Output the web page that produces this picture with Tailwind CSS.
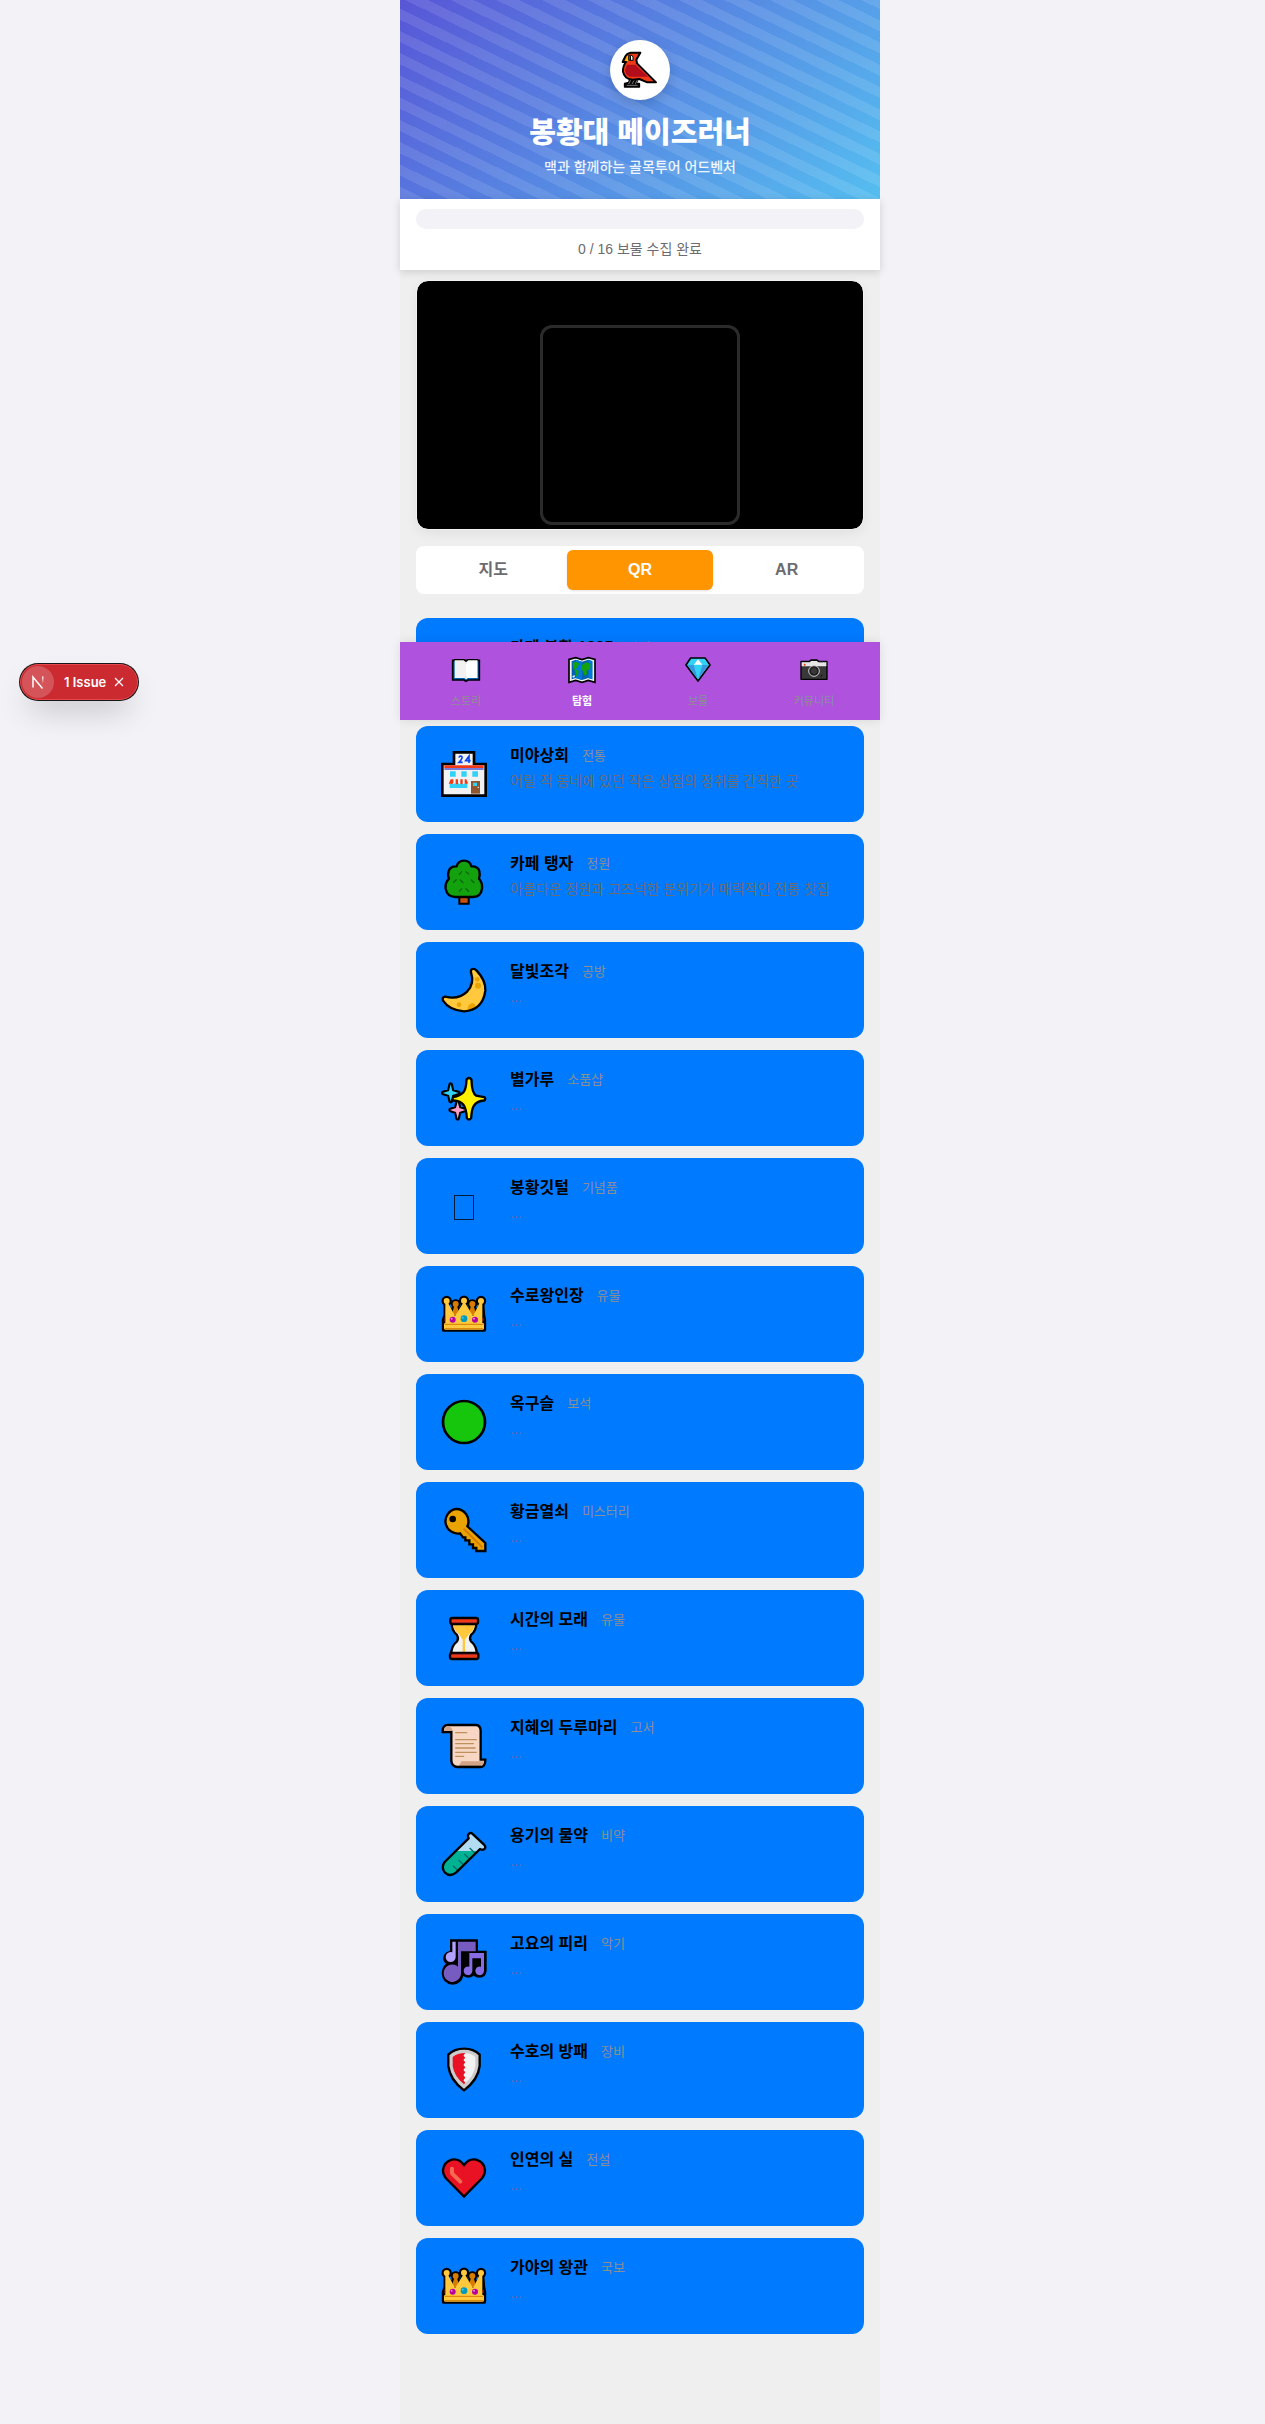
<!DOCTYPE html>
<html lang="ko">
<head>
<meta charset="utf-8">
<meta name="viewport" content="width=device-width, initial-scale=1">
<title>봉황대 메이즈러너</title>
<script src="https://cdn.jsdelivr.net/npm/@tailwindcss/browser@4"></script>
</head>
<body class="relative min-h-screen bg-[#f2f2f7] pl-[15px] font-['Liberation_Sans','Noto_Sans_CJK_KR',sans-serif] text-black">

<svg class="hidden" aria-hidden="true">
  <symbol id="crown" viewBox="90 90 144 144">
    <g stroke="#000" stroke-width="13" stroke-linejoin="round" fill="#000"><circle cx="110" cy="123" r="9"/><circle cx="162" cy="122" r="9"/><circle cx="213" cy="123" r="9"/><circle cx="137" cy="132" r="8"/><circle cx="187" cy="132" r="8"/><path d="M107 125L122 160L137 135L150 160L162 125L174 160L187 135L202 160L216 125L219 165L222 180V209H102V180L107 165Z"/></g>
    <g fill="#d67d00"><circle cx="137" cy="132" r="9"/><circle cx="187" cy="132" r="9"/><path d="M133 137h8l8 28h-24zM183 137h8l8 28h-24z"/></g>
    <g fill="#ffc83d"><circle cx="110" cy="123" r="9"/><circle cx="162" cy="122" r="9"/><circle cx="213" cy="123" r="9"/><path d="M106 128h8l21 40L160 128h5l24 40L209 128h8V190H106Z"/><rect x="102" y="189" width="120" height="20" rx="4"/></g>
    <path d="M104 193H220M104 206H220" stroke="#d67d00" stroke-width="3"/>
    <path d="M104 172q6 7 0 13zM220 172q-6 7 0 13z" fill="#f03a17"/>
    <circle cx="128" cy="179" r="9" fill="#b4009e"/><circle cx="195" cy="179" r="9" fill="#b4009e"/><circle cx="162" cy="176" r="10" fill="#0099bc"/>
    <circle cx="125" cy="176" r="3" fill="#ee79dc"/><circle cx="192" cy="176" r="3" fill="#ee79dc"/><circle cx="158" cy="173" r="3" fill="#31d2f7"/>
  </symbol>
</svg>

<div class="relative mx-auto flex min-h-screen w-full max-w-[480px] flex-col bg-[#efefef] pb-[90px]">

  <header class="relative overflow-hidden bg-[linear-gradient(135deg,#5856d6,#55bef0)] pt-10 pb-[21px] text-center text-white">
    <div class="absolute -inset-1/2 -rotate-19 bg-[repeating-linear-gradient(45deg,transparent_0_7px,rgba(255,255,255,0.1)_7px_17px,transparent_17px_20px)]"></div>
    <div class="relative flex flex-col items-center">
      <div class="size-[60px] rounded-full bg-white shadow-[0_4px_12px_rgba(0,0,0,0.15)]">
        <svg class="size-[60px]" viewBox="630 120 180 180" role="img" aria-label="봉황">
          <path d="M689 240L686 248L674 251V261H718V251H707L713 240" fill="#000" stroke="#000" stroke-width="5" stroke-linejoin="round"/>
          <path d="M693 238L686 252M704 238L696 252M713 238L706 252M680 256H713" stroke="#777" stroke-width="3"/>
          <path d="M721 158H692Q679 160 674 173L668 186H678Q668 199 669 215Q673 237 697 239L718 237L742 247H768L711 190L709 179Z" fill="#f03a17" stroke="#000" stroke-width="6" stroke-linejoin="round"/>
          <path d="M681 194H706L744 230H690Q676 225 675 210Z" fill="#b30d1b"/>
          <path d="M675 183L681 167H690V183Z" fill="#ffb900"/>
          <path d="M686 166H696L699 171V181H686Z" fill="#fff" stroke="#000" stroke-width="3"/><path d="M688 168h5v12h-5z"/>
        </svg>
      </div>
      <h1 class="mt-3 text-[29px] leading-[43px] font-black">봉황대 메이즈러너</h1>
      <p class="mt-px text-sm leading-[22px] font-medium text-white/90">맥과 함께하는 골목투어 어드벤처</p>
    </div>
  </header>

  <section class="relative bg-white px-4 py-[10px] shadow-[0_2px_8px_rgba(0,0,0,0.15)]">
    <div role="progressbar" aria-label="보물 수집" aria-valuemin="0" aria-valuemax="16" aria-valuenow="0" class="h-5 rounded-[10px] bg-[#f2f2f7]"></div>
    <p class="mt-[9px] text-center text-sm leading-[22px] text-[#6c6c70]">0 / 16 보물 수집 완료</p>
  </section>

  <main class="px-4 pt-[10px]">
    <section aria-label="QR 스캔" class="flex h-[250px] items-start justify-center rounded-xl border border-[#f2f2f2] bg-black bg-clip-padding pt-11 shadow-[0_4px_12px_rgba(0,0,0,0.06)]">
      <div class="size-[200px] rounded-xl border-3 border-[#2b2b2b]"></div>
    </section>

    <div role="tablist" class="mt-4 grid grid-cols-3 rounded-lg bg-white p-1 text-base font-semibold text-[#6c6c70]">
      <button type="button" role="tab" class="h-10 rounded-md">지도</button>
      <button type="button" role="tab" aria-selected="true" class="h-10 rounded-md bg-[#ff9500] text-white shadow-sm">QR</button>
      <button type="button" role="tab" class="h-10 rounded-md">AR</button>
    </div>

    <ul class="mt-6 flex flex-col gap-3">
      <li class="flex h-24 items-center gap-[14px] rounded-xl bg-[#007aff] px-4">
        <svg class="mx-2 size-12 shrink-0" viewBox="0 0 144 144"><path d="M30 48H100V84Q100 112 66 112Q30 112 30 84Z" fill="#f2f2f2" stroke="#000" stroke-width="7"/><path d="M100 58h12q8 0 8 12t-8 12h-12" fill="none" stroke="#000" stroke-width="7"/></svg>
        <div class="h-16 min-w-0 pt-0.5"><div class="flex items-center gap-[13px]"><h2 class="text-base font-bold">카페 봉황 1935</h2><span class="text-[13px] leading-6 text-[#8e8e93]">카페</span></div></div>
      </li>
      <li class="flex h-24 items-center gap-[14px] rounded-xl bg-[#007aff] px-4">
        <svg class="mx-2 size-12 shrink-0" viewBox="120 450 144 144">
          <path d="M127 492H162V457H222V492H257V587H127Z" fill="#f2f2f2" stroke="#000" stroke-width="8"/>
          <path d="M133 500H251" stroke="#f03a17" stroke-width="8"/><path d="M133 507H251" stroke="#4f56d6" stroke-width="5"/>
          <path d="M177 473Q178 468 182 468Q187 469 186 474Q184 480 177 487H188M207 489V468L197 482H212" fill="none" stroke="#0a44f0" stroke-width="5"/>
          <g fill="#31d2f7"><path d="M150 514h17v16h-17zM184 514h16v16h-16zM217 514h17v16h-17zM149 548h53v16h-53z"/></g>
          <path d="M152 537H198L204 549Q200 555 195 550Q190 555 185 550Q180 555 175 550Q170 555 165 550Q160 555 156 550Q150 555 146 549Z" fill="#f2f2f2"/>
          <path d="M152 538h8v12q-5 4-8 1h-6zM167 538h7v13q-4 3-7 0zM181 538h7v13q-4 3-7 0zM194 538h5l5 12q-5 4-10 0z" fill="#f03a17"/>
          <path d="M213 543h27v38h-27z" fill="#8e562e"/><path d="M219 548h12v10h-12z" fill="#31d2f7"/><path d="M233 562h4" stroke="#fff" stroke-width="3"/>
        </svg>
        <div class="h-16 min-w-0 pt-0.5"><div class="flex items-center gap-[13px]"><h2 class="text-base font-bold">미야상회</h2><span class="text-[13px] leading-6 text-[#8e8e93]">전통</span></div><p class="mt-[3px] truncate text-sm leading-5 text-[#6c6c70]">어릴 적 동네에 있던 작은 상점의 정취를 간직한 곳</p></div>
      </li>
      <li class="flex h-24 items-center gap-[14px] rounded-xl bg-[#007aff] px-4">
        <svg class="mx-2 size-12 shrink-0" viewBox="120 114 144 144">
          <path d="M178 226h28v25h-28z" fill="#ca5010" stroke="#000" stroke-width="6"/>
          <path d="M192 122Q210 122 214 139Q234 138 238 153Q241 166 237 176Q248 188 246 206Q243 230 220 231H165Q141 230 137 206Q135 188 147 176Q142 166 146 153Q151 138 170 139Q174 122 192 122Z" fill="#13a10e" stroke="#000" stroke-width="7" stroke-linejoin="round"/>
          <path d="M178 163l7-8M198 155l8 7M161 187l8-8M181 180l8 8M214 180l8 8M178 214l7-8M198 206l8 8" stroke="#0b6a0b" stroke-width="4" stroke-linecap="round"/>
        </svg>
        <div class="h-16 min-w-0 pt-0.5"><div class="flex items-center gap-[13px]"><h2 class="text-base font-bold">카페 탱자</h2><span class="text-[13px] leading-6 text-[#8e8e93]">정원</span></div><p class="mt-[3px] truncate text-sm leading-5 text-[#6c6c70]">아름다운 정원과 고즈넉한 분위기가 매력적인 전통 찻집</p></div>
      </li>
      <li class="flex h-24 items-center gap-[14px] rounded-xl bg-[#007aff] px-4">
        <svg class="mx-2 size-12 shrink-0" viewBox="120 438 144 144">
          <path d="M214 449Q221 443 230 452Q258 482 256 512Q248 571 192 574Q148 571 129 542Q125 531 136 530Q176 540 202 514Q224 490 213 457Q212 451 214 449Z" fill="#ffc83d"/>
          <g fill="#eaa300"><circle cx="232" cy="478" r="7"/><circle cx="234" cy="497" r="9"/><circle cx="177" cy="554" r="7"/><path d="M203 573Q201 552 217 549Q226 551 228 560Z"/></g>
          <path d="M214 449Q221 443 230 452Q258 482 256 512Q248 571 192 574Q148 571 129 542Q125 531 136 530Q176 540 202 514Q224 490 213 457Q212 451 214 449Z" fill="none" stroke="#000" stroke-width="7" stroke-linejoin="round"/>
        </svg>
        <div class="h-16 min-w-0 pt-0.5"><div class="flex items-center gap-[13px]"><h2 class="text-base font-bold">달빛조각</h2><span class="text-[13px] leading-6 text-[#8e8e93]">공방</span></div><p class="mt-[3px] truncate text-sm leading-5 text-[#6c6c70]">...</p></div>
      </li>
      <li class="flex h-24 items-center gap-[14px] rounded-xl bg-[#007aff] px-4">
        <svg class="mx-2 size-12 shrink-0" viewBox="90 102 144 144">
          <g stroke="#000" stroke-width="14" stroke-linejoin="round" fill="#000"><path d="M173 120Q177 116 181 120Q182 162 197 170L222 175V178Q198 180 189 195Q182 205 180 233Q177 237 174 233Q172 204 163 192Q154 180 131 178V175Q152 171 163 159Q172 148 173 120Z"/><path d="M122 134L126 153L145 159L126 164L122 183L118 164L100 159L118 153Z"/><path d="M143 187L147 204L164 210L147 215L143 235L139 215L122 210L139 204Z"/></g>
          <path d="M122 133L127 153L146 159L127 165L122 184L117 165L98 159L117 153Z" fill="#31d2f7"/>
          <path d="M143 185L148 204L166 210L148 216L143 236L138 216L120 210L138 204Z" fill="#ff9fc9"/>
          <path d="M173 120Q177 116 181 120Q182 162 197 170L222 175V178Q198 180 189 195Q182 205 180 233Q177 237 174 233Q172 204 163 192Q154 180 131 178V175Q152 171 163 159Q172 148 173 120Z" fill="#fff100"/>
        </svg>
        <div class="h-16 min-w-0 pt-0.5"><div class="flex items-center gap-[13px]"><h2 class="text-base font-bold">별가루</h2><span class="text-[13px] leading-6 text-[#8e8e93]">소품샵</span></div><p class="mt-[3px] truncate text-sm leading-5 text-[#6c6c70]">...</p></div>
      </li>
      <li class="flex h-24 items-center gap-[14px] rounded-xl bg-[#007aff] px-4">
        <svg class="mx-2 size-12 shrink-0" viewBox="90 426 144 144"><rect x="133.5" y="466.5" width="57" height="72" fill="none" stroke="#001b3c" stroke-width="3"/></svg>
        <div class="h-16 min-w-0 pt-0.5"><div class="flex items-center gap-[13px]"><h2 class="text-base font-bold">봉황깃털</h2><span class="text-[13px] leading-6 text-[#8e8e93]">기념품</span></div><p class="mt-[3px] truncate text-sm leading-5 text-[#6c6c70]">...</p></div>
      </li>
      <li class="flex h-24 items-center gap-[14px] rounded-xl bg-[#007aff] px-4">
        <svg class="mx-2 size-12 shrink-0"><use href="#crown"/></svg>
        <div class="h-16 min-w-0 pt-0.5"><div class="flex items-center gap-[13px]"><h2 class="text-base font-bold">수로왕인장</h2><span class="text-[13px] leading-6 text-[#8e8e93]">유물</span></div><p class="mt-[3px] truncate text-sm leading-5 text-[#6c6c70]">...</p></div>
      </li>
      <li class="flex h-24 items-center gap-[14px] rounded-xl bg-[#007aff] px-4">
        <svg class="mx-2 size-12 shrink-0" viewBox="90 414 144 144"><circle cx="162" cy="486" r="63" fill="#16c60c" stroke="#000" stroke-width="8"/></svg>
        <div class="h-16 min-w-0 pt-0.5"><div class="flex items-center gap-[13px]"><h2 class="text-base font-bold">옥구슬</h2><span class="text-[13px] leading-6 text-[#8e8e93]">보석</span></div><p class="mt-[3px] truncate text-sm leading-5 text-[#6c6c70]">...</p></div>
      </li>
      <li class="flex h-24 items-center gap-[14px] rounded-xl bg-[#007aff] px-4">
        <svg class="mx-2 size-12 shrink-0" viewBox="90 78 144 144">
          <path d="M137 87A37 37 0 0 1 172 139L226 189V213H199V204H189V193H178V181H166V172H159L150 160A37 37 0 1 1 137 87Z" fill="#eaa300" stroke="#000" stroke-width="7"/>
          <path d="M161 146L217 202" stroke="#d67d00" stroke-width="6"/><circle cx="128" cy="117" r="10"/>
        </svg>
        <div class="h-16 min-w-0 pt-0.5"><div class="flex items-center gap-[13px]"><h2 class="text-base font-bold">황금열쇠</h2><span class="text-[13px] leading-6 text-[#8e8e93]">미스터리</span></div><p class="mt-[3px] truncate text-sm leading-5 text-[#6c6c70]">...</p></div>
      </li>
      <li class="flex h-24 items-center gap-[14px] rounded-xl bg-[#007aff] px-4">
        <svg class="mx-2 size-12 shrink-0" viewBox="90 402 144 144">
          <path d="M125 424H199Q200 452 183 465Q177 475 183 484Q200 497 201 526H123Q124 497 141 484Q147 475 141 465Q124 452 125 424Z" fill="#f2f2f2" stroke="#000" stroke-width="7"/>
          <path d="M129 432H195Q195 449 178 461L165 479V515L190 519V521H134V519L158 515V479L146 461Q129 449 129 432Z" fill="#ffc83d"/>
          <path d="M168 443h3M176 440h3M172 449h3" stroke="#eaa300" stroke-width="2"/>
          <g fill="#f03a17" stroke="#000" stroke-width="7"><rect x="121" y="414" width="83" height="18" rx="6"/><rect x="120" y="519" width="85" height="18" rx="6"/></g>
          <path d="M126 428H200M126 523H200" stroke="#a4262c" stroke-width="3"/>
        </svg>
        <div class="h-16 min-w-0 pt-0.5"><div class="flex items-center gap-[13px]"><h2 class="text-base font-bold">시간의 모래</h2><span class="text-[13px] leading-6 text-[#8e8e93]">유물</span></div><p class="mt-[3px] truncate text-sm leading-5 text-[#6c6c70]">...</p></div>
      </li>
      <li class="flex h-24 items-center gap-[14px] rounded-xl bg-[#007aff] px-4">
        <svg class="mx-2 size-12 shrink-0" viewBox="90 96 144 144">
          <path d="M98 126Q97 105 114 105H198Q211 106 212 121V209H226Q226 230 212 231H142Q125 229 124 212V126Z" fill="#f7d7c4" stroke="#000" stroke-width="7"/>
          <path d="M102 122Q104 109 114 109Q126 111 128 122Z" fill="#d3a488"/><path d="M154 214H222Q220 227 211 228H143Q152 224 154 214Z" fill="#d3a488"/><path d="M150 225H217L211 228H143Z" fill="#8e6b55"/>
          <path d="M137 128H170M137 149H199M137 161H190M137 174H195M137 187H199M137 199H161" stroke="#bf8f5c" stroke-width="4" stroke-linecap="round"/>
        </svg>
        <div class="h-16 min-w-0 pt-0.5"><div class="flex items-center gap-[13px]"><h2 class="text-base font-bold">지혜의 두루마리</h2><span class="text-[13px] leading-6 text-[#8e8e93]">고서</span></div><p class="mt-[3px] truncate text-sm leading-5 text-[#6c6c70]">...</p></div>
      </li>
      <li class="flex h-24 items-center gap-[14px] rounded-xl bg-[#007aff] px-4">
        <svg class="mx-2 size-12 shrink-0" viewBox="90 420 144 144">
          <path d="M176 432Q183 425 190 434L222 464Q230 472 222 478Q217 481 210 477L138 548Q120 562 105 548Q92 533 104 516L176 445Q172 437 176 432Z" fill="#b3dbf2"/>
          <path d="M141 483H203L138 548Q120 562 105 548Q92 533 104 516Z" fill="#00b294"/>
          <path d="M179 474l16 16M163 492l15 15M146 510l15 15M129 527l13 13" stroke="#006f6b" stroke-width="4"/>
          <path d="M176 432Q183 425 190 434L222 464Q230 472 222 478Q217 481 210 477L138 548Q120 562 105 548Q92 533 104 516L176 445Q172 437 176 432Z" fill="none" stroke="#000" stroke-width="7" stroke-linejoin="round"/>
        </svg>
        <div class="h-16 min-w-0 pt-0.5"><div class="flex items-center gap-[13px]"><h2 class="text-base font-bold">용기의 물약</h2><span class="text-[13px] leading-6 text-[#8e8e93]">비약</span></div><p class="mt-[3px] truncate text-sm leading-5 text-[#6c6c70]">...</p></div>
      </li>
      <li class="flex h-24 items-center gap-[14px] rounded-xl bg-[#007aff] px-4">
        <svg class="mx-2 size-12 shrink-0" viewBox="90 84 144 144">
          <path d="M120 88H204V122H230V182Q228 203 208 203Q197 203 191 197Q184 203 173 203Q165 202 160 198Q154 223 128 224Q97 222 95 190Q96 171 108 161Q98 153 100 140Q103 126 120 122Z"/>
          <path d="M127 95h10v46a15 15 0 1 1-10-14z" fill="#b4a0ff"/>
          <path d="M144 95H197V124H153V190A26 26 0 1 1 144 170Z" fill="#765bc1"/>
          <path d="M178 129H222V182A13 13 0 1 1 213 170V145H187V182A13 13 0 1 1 178 170Z" fill="#886ce4"/>
        </svg>
        <div class="h-16 min-w-0 pt-0.5"><div class="flex items-center gap-[13px]"><h2 class="text-base font-bold">고요의 피리</h2><span class="text-[13px] leading-6 text-[#8e8e93]">악기</span></div><p class="mt-[3px] truncate text-sm leading-5 text-[#6c6c70]">...</p></div>
      </li>
      <li class="flex h-24 items-center gap-[14px] rounded-xl bg-[#007aff] px-4">
        <svg class="mx-2 size-12 shrink-0" viewBox="90 408 144 144">
          <path d="M162 416Q191 416 209 434V468Q204 510 162 541Q120 510 115 468V434Q133 416 162 416Z" fill="#ccc" stroke="#000" stroke-width="7"/>
          <path d="M162 429Q183 429 196 441V468Q191 500 162 523Z" fill="#f2f2f2"/>
          <path d="M166 429Q142 429 128 441V468Q133 500 162 523L166 518L160 511L166 503L160 495L166 487L160 480L166 472L160 465L166 457L160 450L166 443L160 437Z" fill="#e81224"/>
        </svg>
        <div class="h-16 min-w-0 pt-0.5"><div class="flex items-center gap-[13px]"><h2 class="text-base font-bold">수호의 방패</h2><span class="text-[13px] leading-6 text-[#8e8e93]">장비</span></div><p class="mt-[3px] truncate text-sm leading-5 text-[#6c6c70]">...</p></div>
      </li>
      <li class="flex h-24 items-center gap-[14px] rounded-xl bg-[#007aff] px-4">
        <svg class="mx-2 size-12 shrink-0" viewBox="90 87 144 144">
          <path d="M162 120Q177 99 199 104Q223 111 225 136Q225 151 214 162L162 215L110 162Q99 151 99 136Q101 111 125 104Q147 99 162 120Z" fill="#e81224" stroke="#000" stroke-width="7"/>
          <path d="M126 131V145L151 170" fill="none" stroke="#f4694f" stroke-width="12" stroke-linecap="round" stroke-linejoin="round"/>
        </svg>
        <div class="h-16 min-w-0 pt-0.5"><div class="flex items-center gap-[13px]"><h2 class="text-base font-bold">인연의 실</h2><span class="text-[13px] leading-6 text-[#8e8e93]">전설</span></div><p class="mt-[3px] truncate text-sm leading-5 text-[#6c6c70]">...</p></div>
      </li>
      <li class="flex h-24 items-center gap-[14px] rounded-xl bg-[#007aff] px-4">
        <svg class="mx-2 size-12 shrink-0"><use href="#crown"/></svg>
        <div class="h-16 min-w-0 pt-0.5"><div class="flex items-center gap-[13px]"><h2 class="text-base font-bold">가야의 왕관</h2><span class="text-[13px] leading-6 text-[#8e8e93]">국보</span></div><p class="mt-[3px] truncate text-sm leading-5 text-[#6c6c70]">...</p></div>
      </li>
    </ul>
  </main>

  <nav class="absolute inset-x-0 top-[642px] grid h-[78px] grid-cols-4 bg-[#af52de] px-2 text-[11px] leading-4 text-[#8e8e93] shadow-[0_0_10px_rgba(0,0,0,0.1)]">
    <a href="#story" class="flex flex-col items-center gap-[7px] pt-3">
      <svg class="size-8" viewBox="150 164 96 96">
        <path d="M158 183H238V242H204L198 246L192 242H158Z" fill="#0063b1" stroke="#000" stroke-width="5"/>
        <path d="M164 181H193L198 186L203 181H232V236H203L198 240L193 236H164Z" fill="#f2f2f2"/><path d="M198 186L203 181H232V236H203L198 240Z" fill="#fff"/>
        <path d="M162 181H192L198 186L204 181H234" fill="none" stroke="#000" stroke-width="4"/><path d="M198 187v6M198 230v8" stroke="#ccc" stroke-width="2"/>
      </svg><span>스토리</span></a>
    <a href="#explore" aria-current="page" class="flex flex-col items-center gap-[7px] pt-3 font-bold text-white">
      <svg class="size-8" viewBox="498 164 96 96">
        <path d="M507 180L527 175L546 181L565 175L585 180V249L565 243L546 249L527 243L507 249Z" fill="#f2f2f2" stroke="#000" stroke-width="5"/>
        <path d="M515 186L527 181L546 187L565 181L577 186V240L565 236L546 242L527 236L515 240Z" fill="#0063b1"/>
        <path d="M527 181L546 187V242L527 236ZM565 181L577 186V240L565 236Z" fill="#0078d7"/>
        <path d="M518 190L530 188L538 193L532 204L526 210L536 214L534 226L529 232L527 218L520 206ZM546 197L558 189L571 193V208L560 214L562 224L554 229L548 214L543 208Z" fill="#13a10e"/><path d="M517 231l7-4v6l-5 2z" fill="#fff"/>
      </svg><span>탐험</span></a>
    <a href="#treasure" class="flex flex-col items-center gap-[7px] pt-3">
      <svg class="size-8" viewBox="846 164 96 96">
        <path d="M872 176H915L930 197L894 245L858 197Z" fill="#31d2f7" stroke="#000" stroke-width="5" stroke-linejoin="round"/>
        <path d="M862 197H881L893 239ZM926 197H907L895 239Z" fill="#3a96dd"/><path d="M881 196L894 180L907 196Z" fill="#fff"/><path d="M874 179H893L881 196ZM914 179L926 196H908Z" fill="#31d2f7"/>
      </svg><span>보물</span></a>
    <a href="#community" class="flex flex-col items-center gap-[7px] pt-3">
      <svg class="size-8" viewBox="1194 164 96 96">
        <path d="M1203 186H1228L1233 182H1251L1256 186H1281V240H1203Z" fill="#383838" stroke="#000" stroke-width="4" stroke-linejoin="round"/>
        <path d="M1205 189H1229L1234 185H1250L1255 189H1279V201H1205Z" fill="#e6e6e6"/><path d="M1258 188h16" stroke="#555" stroke-width="3" stroke-dasharray="4 3"/><circle cx="1214" cy="196" r="3" fill="#f03a17"/>
        <circle cx="1242" cy="215" r="16" fill="#202020" stroke="#ccc" stroke-width="3"/><circle cx="1242" cy="215" r="9" fill="#383838"/><path d="M1262 231l5-4" stroke="#000" stroke-width="3"/>
      </svg><span>커뮤니티</span></a>
  </nav>
</div>

<div class="absolute top-[664px] left-5 flex h-9 items-center rounded-full border border-[#e5484d] bg-[#ca2a30] pr-3 pl-px font-[Inter,sans-serif] text-white shadow-[0_0_0_1px_#171717,0_16px_32px_-8px_rgba(0,0,0,0.24)]">
  <button type="button" aria-label="Open Next.js Dev Tools" class="size-8 rounded-full bg-white/20">
    <svg class="size-8" viewBox="0 0 32 32" fill="none"><defs><linearGradient id="fade" x1="0" y1="0" x2="0" y2="1"><stop offset="0" stop-color="#fff"/><stop offset="1" stop-color="#fff" stop-opacity="0"/></linearGradient></defs><path d="M11 21.500V11L20.500 22.500" stroke="#fff" stroke-width="1.500"/><rect x="20" y="10.500" width="1.500" height="7" fill="url(#fade)"/></svg>
  </button>
  <button type="button" class="ml-[10px] text-[13px] leading-5 font-semibold">1 Issue</button>
  <button type="button" aria-label="닫기" class="ml-[7px]"><svg class="size-3" viewBox="0 0 12 12" stroke="#fff" stroke-width="1.200"><path d="M2 2l8 8M10 2l-8 8"/></svg></button>
</div>
</body>
</html>
